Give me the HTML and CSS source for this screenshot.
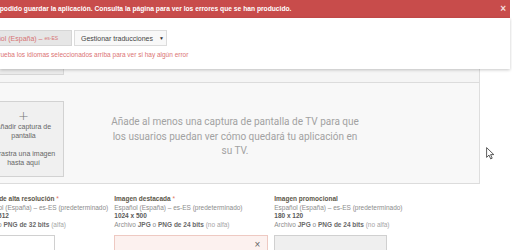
FILE: index.html
```html
<!DOCTYPE html>
<html lang="es">
<head>
<meta charset="utf-8">
<title>Ficha de Play Store</title>
<link rel="stylesheet" href="styles.css">
</head>
<body>
<div class="page">
  <section class="strip"><div class="strip-box"></div></section>
  <section class="shots">
    <div class="drop">
      <span class="plus">+</span>
      <span class="drop-line">Añadir captura de pantalla</span>
      <span class="drop-line drop-sub">Arrastra una imagen hasta aquí</span>
    </div>
    <div class="hint-wrap">
      <p class="hint">Añade al menos una captura de pantalla de TV para que los usuarios puedan ver cómo quedará tu aplicación en su TV.</p>
    </div>
  </section>
  <section class="assets">
    <div class="asset">
      <div class="a-title">Icono de alta resolución <span class="req">*</span></div>
      <div class="a-lang">Español (España) – es-ES (predeterminado)</div>
      <div class="a-size">512 x 512</div>
      <div class="a-fmt">Archivo <b>PNG de 32 bits</b> <span class="dim">(alfa)</span></div>
      <div class="a-box a-box-icon"></div>
    </div>
    <div class="asset">
      <div class="a-title">Imagen destacada <span class="req">*</span></div>
      <div class="a-lang">Español (España) – es-ES (predeterminado)</div>
      <div class="a-size">1024 x 500</div>
      <div class="a-fmt">Archivo <b>JPG</b> o <b>PNG de 24 bits</b> <span class="dim">(no alfa)</span></div>
      <div class="a-box a-box-err"><span class="a-x">×</span></div>
    </div>
    <div class="asset">
      <div class="a-title">Imagen promocional</div>
      <div class="a-lang">Español (España) – es-ES (predeterminado)</div>
      <div class="a-size">180 x 120</div>
      <div class="a-fmt">Archivo <b>JPG</b> o <b>PNG de 24 bits</b> <span class="dim">(no alfa)</span></div>
      <div class="a-box a-box-promo"></div>
    </div>
  </section>
</div>

<div class="notice">
  <div class="errbar">
    <span class="err-text">No se ha podido guardar la aplicación. Consulta la página para ver los errores que se han producido.</span>
    <span class="err-close">×</span>
  </div>
  <div class="panel">
    <div class="btn-row">
      <div class="lang-btn">Español (España) – <span class="lang-code">es-ES</span></div>
      <div class="manage-btn">Gestionar traducciones <span class="caret">▼</span></div>
    </div>
    <p class="panel-hint">Comprueba los idiomas seleccionados arriba para ver si hay algún error</p>
  </div>
</div>

<svg class="cursor" width="9" height="13" viewBox="0 0 9 13"><path d="M0.6 0.6 L0.6 10.4 L3 8.1 L4.7 11.9 L6.2 11.2 L4.6 7.6 L7.8 7.6 Z" fill="#fff" stroke="#333" stroke-width="0.8" stroke-linejoin="round"/></svg>
</body>
</html>
```
FILE: styles.css
```css
* { box-sizing: border-box; }
html, body { margin: 0; padding: 0; }
body {
  width: 512px;
  height: 250px;
  overflow: hidden;
  position: relative;
  background: #fff;
  font-family: "Liberation Sans", Arial, sans-serif;
  color: #555;
}

.page { width: 480px; }

.strip {
  height: 83px;
  background: #f5f5f5;
  border-right: 1px solid #dedede;
  border-bottom: 1px solid #dcdcdc;
  display: flex;
  align-items: flex-end;
  padding-bottom: 7px;
}
.strip-box {
  width: 64px;
  height: 20px;
  background: #eaeaea;
  border: 1px solid #d6d6d6;
  border-left: none;
}

.shots {
  height: 101px;
  background: #f8f8f8;
  border-right: 1px solid #dedede;
  border-bottom: 1px solid #dcdcdc;
  display: flex;
  align-items: flex-start;
}
.drop {
  margin-top: 18px;
  margin-left: -17px;
  width: 81px;
  height: 76px;
  flex: none;
  background: #f0f0f0;
  border: 1px solid #d2d2d2;
  display: flex;
  flex-direction: column;
  align-items: center;
  justify-content: center;
  text-align: center;
  padding: 0 4px 2px;
  font-size: 7px;
  line-height: 9px;
  color: #666;
}
.plus {
  font-family: "DejaVu Sans", sans-serif;
  font-weight: 200;
  font-size: 13px;
  line-height: 13px;
  color: #777;
}
.drop-line { display: block; }
.drop-sub { margin-top: 9px; }

.hint-wrap {
  width: 342px;
  flex: none;
  align-self: center;
  display: flex;
  justify-content: center;
  padding-top: 8px;
}
.hint {
  margin: 0;
  width: 252px;
  text-align: center;
  font-family: Roboto, "Liberation Sans", sans-serif;
  font-size: 10px;
  line-height: 14.5px;
  color: #a2a2a2;
}

.assets {
  display: flex;
  gap: 6px;
  margin-left: -20px;
  padding-top: 10px;
  font-size: 6.5px;
  line-height: 9px;
}
.asset { display: flex; flex-direction: column; align-items: flex-start; }
.a-title { font-weight: bold; color: #5c5749; }
.req { color: #e0735f; font-weight: normal; }
.a-lang { color: #8c8c8c; }
.a-size { font-weight: bold; color: #5a5a5a; margin-top: -1px; }
.a-fmt { color: #8c8c8c; }
.a-fmt b { color: #6a6a6a; }
.dim { color: #a5a5a5; }
.a-box {
  margin-top: 6px;
  height: 75px;
  border: 1px solid #d0d0d0;
  position: relative;
}
.a-box-icon { width: 75px; background: #fff; }
.a-box-err { width: 154px; background: #fcf1ef; border-color: #eec9c2; }
.a-box-promo { width: 113px; background: #efefef; }
.a-x {
  position: absolute;
  right: 7px;
  top: 4px;
  font-size: 10px;
  line-height: 10px;
  color: #666;
}

.notice {
  position: absolute;
  top: 0;
  left: 0;
  width: 510px;
}
.errbar {
  height: 18px;
  background: #c84c4b;
  display: flex;
  align-items: center;
  overflow: hidden;
  white-space: nowrap;
  color: #fff;
}
.err-text {
  margin-left: -30px;
  font-weight: bold;
  font-size: 6.7px;
  line-height: 10px;
}
.err-close {
  margin-left: auto;
  margin-right: 4px;
  font-weight: bold;
  font-size: 10px;
  line-height: 10px;
  color: #f4dcdc;
}
.panel {
  height: 51px;
  background: #fff;
  padding-top: 12px;
  box-shadow: 0 1px 3px rgba(0, 0, 0, 0.22);
  overflow: hidden;
}
.btn-row { display: flex; gap: 2px; height: 16px; }
.lang-btn {
  margin-left: -28px;
  width: 100px;
  height: 16px;
  padding-left: 8px;
  background: #e6e6e6;
  border: 1px solid #d6d6d6;
  display: flex;
  align-items: center;
  white-space: nowrap;
  font-size: 7px;
  color: #d67474;
}
.lang-code { font-size: 5px; margin-left: 2px; }
.manage-btn {
  width: 93px;
  height: 16px;
  padding-left: 6px;
  background: #f8f8f8;
  border: 1px solid #dcdcdc;
  display: flex;
  align-items: center;
  white-space: nowrap;
  font-size: 7px;
  color: #444;
}
.caret { font-size: 5px; margin-left: 6px; color: #333; }
.panel-hint {
  margin: 4px 0 0 -19px;
  font-size: 6.5px;
  line-height: 9px;
  color: #db7474;
  white-space: nowrap;
}

.cursor {
  position: absolute;
  left: 486px;
  top: 147px;
}
```
